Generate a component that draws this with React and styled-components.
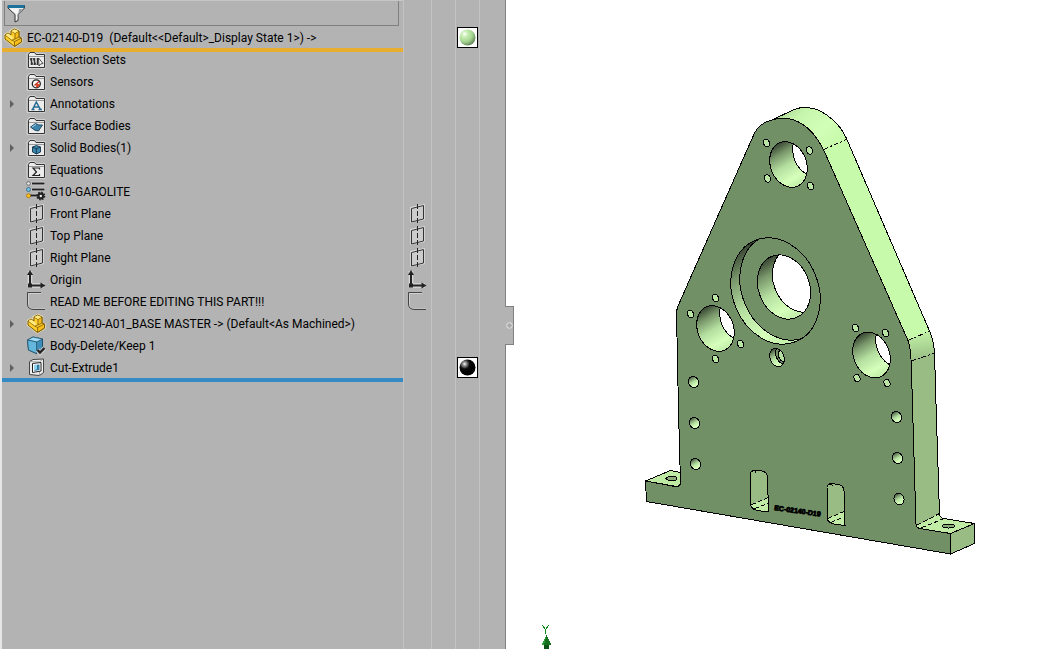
import { useState } from 'react';
import styled, { createGlobalStyle } from 'styled-components';

const GlobalStyle = createGlobalStyle`
* {
    box-sizing: border-box;
}
body {
    margin: 0;
    background: #ffffff;
    font-family: Roboto, "Noto Sans", sans-serif;
    font-size: 12px;
    color: #000000;
}
`;

const Page = styled.div`
display: flex;
min-height: 100vh;
`;

const Panel = styled.aside`
position: relative;
display: flex;
flex: none;
background: #b3b3b3;
border-left: 2px solid #e6e6e6;
border-right: 1px solid #808080;
`;

const TreeColumn = styled.div`
width: 401px;
border-top: 1px solid #c6c6c6;
`;

const FilterBar = styled.label`
display: flex;
align-items: center;
height: 25px;
margin: 0 4px 1px 2px;
padding-left: 1px;
border: 1px solid #808080;
border-top: none;
`;

const FilterInput = styled.input`
flex: 1;
min-width: 0;
border: none;
outline: none;
background: transparent;
font: inherit;
`;

const Tree = styled.ul`
list-style: none;
margin: 0;
padding: 0;
`;

const Row = styled.li`
position: relative;
display: flex;
align-items: center;
height: 22px;
padding-left: ${(props) => (props.$root ? 1 : 4)}px;
white-space: pre;
`;

const Bar = styled.span`
position: absolute;
z-index: 1;
left: 0;
right: 0;
bottom: -3px;
height: 4px;
background: ${(props) => props.$color};
`;

const Expander = styled.button`
display: flex;
align-items: center;
justify-content: center;
width: 12px;
height: 16px;
margin-right: 8px;
padding: 0;
border: none;
background: none;
visibility: ${(props) => (props.$shown ? 'visible' : 'hidden')};
`;

const Icon = styled.svg`
display: block;
flex: none;
width: 20px;
height: 20px;
overflow: visible;
`;

const Label = styled.span`
margin-left: 4px;
line-height: 20px;
`;

const Lane = styled.div`
width: ${(props) => props.$width}px;
padding-top: 27px;
border-left: 1px solid #c3c3c3;
`;

const Slot = styled.div`
display: flex;
align-items: ${(props) => (props.$top ? 'flex-start' : 'center')};
height: 22px;
padding-left: ${(props) => (props.$top ? 1 : 3)}px;
`;

const Swatch = styled.button`
display: block;
width: 21px;
height: 21px;
padding: 1px;
border: 1px solid #000000;
background: #ffffff;
& svg {
    display: block;
    width: 17px;
    height: 17px;
}
`;

const Handle = styled.button`
position: absolute;
z-index: 2;
right: -9px;
top: calc(50% - 19px);
display: flex;
align-items: center;
justify-content: center;
width: 9px;
height: 39px;
padding: 0;
border: 1px solid #808080;
border-left: none;
background: #b3b3b3;
`;

const Viewport = styled.main`
flex: 1;
min-width: 0;
height: 100vh;
& svg {
    display: block;
    width: 100%;
    height: 100%;
}
`;

const Folder = ({ children }) => (
    <Icon viewBox="0 0 20 20">
        <path d="M1 18.5V4L3 1.5H9L10.5 3.5H19V18.5Z" fill="none" stroke="#d0d0d0" />
        <path d="M2.5 17.5V4.5L4 2.5H8.5L10 4.5H18.5V17.5Z" fill="#ececec" stroke="#333" />
        <path d="M3 6.5H18" stroke="#999" />
        {children}
    </Icon>
);

const SelectionIcon = () => (
    <Folder>
        <path d="M5.5 8V15M8.5 8V15M11.5 8V15" stroke="#333" strokeWidth="1.5" />
        <path d="M4 8L7 15M7 8L10 15" stroke="#333" />
        <path d="M12.5 8L17 13.5L14.5 14L13 16Z" fill="#fff" stroke="#222" strokeWidth=".8" />
    </Folder>
);

const SensorIcon = () => (
    <Folder>
        <circle cx="10.3" cy="11.8" r="4" fill="#fff" stroke="#222" strokeWidth="1.3" />
        <path d="M10.3 12L13.8 12A4 4 0 0 1 10 15.5Z" fill="#e03c20" />
        <path d="M8.5 13.5L13 9.5" stroke="#c42a16" strokeWidth="1.3" />
    </Folder>
);

const AnnotationIcon = () => (
    <Folder>
        <path d="M6.5 15.5L10.3 8L14.5 15.5M8 13H13M5.5 15.5H8.5M12.5 15.5H16" fill="none" stroke="#246a93" strokeWidth="1.5" />
    </Folder>
);

const SurfaceIcon = () => (
    <Folder>
        <path d="M4.5 11L9.5 7.5Q12.5 9.5 16.5 9L12.5 15Q9 15.5 4.5 11Z" fill="#3f84ad" stroke="#12384f" strokeWidth=".8" />
        <path d="M6 11L10 8.500" stroke="#9bd0ea" />
    </Folder>
);

const SolidIcon = () => (
    <Folder>
        <path d="M6.5 9L10.5 7.5L14.5 9V14L10.5 16L6.5 14Z" fill="#3c86b0" stroke="#103448" strokeWidth=".9" />
        <path d="M6.5 9L10.3 10.8V15.8M10.3 10.8L14.5 9" fill="none" stroke="#103448" strokeWidth=".9" />
    </Folder>
);

const EquationIcon = () => (
    <Folder>
        <path d="M13.5 9.5V8H7L10.5 12L7 15.5H13.5V14" fill="none" stroke="#222" strokeWidth="1.2" />
    </Folder>
);

const MaterialIcon = () => (
    <Icon viewBox="0 0 20 20">
        <path d="M5.5 1.5H19M5.5 7.5H19M5.5 13.5H12" stroke="#d8d8d8" strokeWidth="3.5" />
        <path d="M6 1.5H18.5M6 7.5H18.5M4 13.5H12" stroke="#222" strokeWidth="2" />
        <circle cx="2.5" cy="1.5" r="1.8" fill="#eee" stroke="#555" strokeWidth=".8" />
        <circle cx="2.5" cy="7.5" r="2" fill="#7cc4e4" stroke="#276080" strokeWidth=".8" />
        <circle cx="2.5" cy="13.7" r="2" fill="#ffc320" stroke="#a67500" strokeWidth=".8" />
        <circle cx="14.8" cy="14" r="3.4" fill="#222" />
        <circle cx="14.8" cy="14" r="3.7" fill="none" stroke="#222" strokeWidth="1.5" strokeDasharray="1.5 1.4" />
        <circle cx="14.8" cy="14" r="1.2" fill="#eee" />
    </Icon>
);

const PlaneIcon = () => (
    <Icon viewBox="0 0 20 20">
        <path d="M4.5 4L16.5 1.5V15L4.5 17.5Z" fill="#d0d0d0" stroke="#dcdcdc" strokeWidth="2.5" />
        <path d="M4.5 4.5L16.5 1.5V15L4.5 18Z" fill="#cccccc" stroke="#333" />
        <path d="M10.5 0V5M10.5 7V12M10.5 14V19" stroke="#222" />
    </Icon>
);

const OriginIcon = () => (
    <Icon viewBox="0 0 20 20">
        <path d="M4 1V15.5H18" fill="none" stroke="#d8d8d8" strokeWidth="4.5" />
        <path d="M4 3V15.5H16" fill="none" stroke="#222" strokeWidth="2" />
        <path d="M4 0L7 5H1ZM19.5 15.5L14.5 12.5V18.5ZM2 13.5H6V17.5H2Z" fill="#222" />
    </Icon>
);

const SketchIcon = () => (
    <Icon viewBox="0 0 20 20">
        <path d="M15 1.5H2.5V12Q2.5 17 8 17H19" fill="none" stroke="#d0d0d0" />
        <path d="M15 .5H1.5V12Q1.5 17.5 8 17.5H19" fill="none" stroke="#444" />
    </Icon>
);

const PartIcon = () => (
    <Icon viewBox="0 0 20 20">
        <path d="M2 7L5 5L8 6L7.5 3L12 1L16 3V9L18.5 10V14L11.5 18.5L8.5 16L2 11Z" fill="#f3c11d" stroke="#e2d9b0" strokeWidth="2.5" />
        <path d="M2 7L5 5L8 7V3L11.5 1L16 3V9L18.5 10V14L11.5 18.5L2 11Z" fill="#ffd02c" stroke="#7a5a08" />
        <path d="M8 3L12 5.5V11L16 9V3L12 5.5M2 7L8.5 12L12 11M8.5 12L11.5 13.5V18.5L18.5 14V10L11.5 13.5" fill="#f0b010" fillOpacity=".6" stroke="#7a5a08" strokeWidth=".8" />
        <path d="M8.3 3L11.5 1.5L15.5 3L12 5ZM2.5 7L5 5.5L8 7.5L11 11L8.5 11.5Z" fill="#ffe982" />
    </Icon>
);

const BodyDeleteIcon = () => (
    <Icon viewBox="0 0 20 20">
        <path d="M1.5 4L7 1L16.5 3V13L10.5 17.5L2.5 14Z" fill="#3d8db8" stroke="#1d4c66" />
        <path d="M1.5 4L7 1L16.5 3L10.5 6Z" fill="#9ddcf4" stroke="#1d4c66" strokeWidth=".7" />
        <path d="M1.5 4L10.5 6V17.5L2.5 14Z" fill="#63b6dc" stroke="#1d4c66" strokeWidth=".7" />
        <path d="M11.5 14L14 17L18.5 12" fill="none" stroke="#c8c8c8" strokeWidth="4.5" />
        <path d="M11.5 14L14 16.5L18.5 12" fill="none" stroke="#222" strokeWidth="2.4" />
    </Icon>
);

const CutIcon = () => (
    <Icon viewBox="0 0 20 20">
        <path d="M3.5 3.5L7 1.5L17.5 1V14.5L13.5 17.5L3.5 16.5Z" fill="#ededed" stroke="#444" />
        <path d="M3.5 3.5L13.5 4V17.5M13.5 4L17 1" fill="none" stroke="#888" strokeWidth=".7" />
        <path d="M6.500 5.5L15 4.5V13L6.500 14.5Z" fill="#fff" stroke="#222" />
        <path d="M8 7L13.5 6.5V12L8 13Z" fill="#2d7ba4" />
        <path d="M8 7H11V11L8 13Z" fill="#8fd2ee" />
    </Icon>
);

const FunnelIcon = () => (
    <Icon viewBox="0 0 20 20">
        <path d="M2 2.5H18.5V5L12 11.5V17.5L9 19V11.5L2 5Z" fill="#e4e4e4" stroke="#333" />
        <path d="M2 2H18.5V5H2Z" fill="#1d719d" />
        <path d="M3.5 5.5H17L11.5 11V16L10 17V11Z" fill="#f6f6f6" />
        <path d="M13 6H16.5L11.5 11V17Z" fill="#95a0a6" />
    </Icon>
);

const Ball = ({ id, stops }) => (
    <svg viewBox="0 0 17 17">
        <defs>
            <radialGradient id={id} cx=".32" cy=".28" r=".75">
                {stops.map(([offset, color]) => (
                    <stop key={offset} offset={offset} stopColor={color} />
                ))}
            </radialGradient>
        </defs>
        <circle cx="8.5" cy="8.5" r="8" fill={`url(#${id})`} />
    </svg>
);

const greenStops = [[0, '#ffffff'], [0.25, '#c9efb6'], [0.65, '#a5d590'], [1, '#67895a']];
const blackStops = [[0, '#ffffff'], [0.12, '#aaaaaa'], [0.42, '#0a0a0a'], [1, '#000000']];

const rootItem = { name: 'EC-02140-D19  (Default<<Default>_Display State 1>) ->', swatch: 'green' };

const items = [
    { name: 'Selection Sets', icon: SelectionIcon },
    { name: 'Sensors', icon: SensorIcon },
    { name: 'Annotations', icon: AnnotationIcon, expandable: true },
    { name: 'Surface Bodies', icon: SurfaceIcon },
    { name: 'Solid Bodies(1)', icon: SolidIcon, expandable: true },
    { name: 'Equations', icon: EquationIcon },
    { name: 'G10-GAROLITE', icon: MaterialIcon },
    { name: 'Front Plane', icon: PlaneIcon, display: PlaneIcon },
    { name: 'Top Plane', icon: PlaneIcon, display: PlaneIcon },
    { name: 'Right Plane', icon: PlaneIcon, display: PlaneIcon },
    { name: 'Origin', icon: OriginIcon, display: OriginIcon },
    { name: 'READ ME BEFORE EDITING THIS PART!!!', icon: SketchIcon, display: SketchIcon },
    { name: 'EC-02140-A01_BASE MASTER -> (Default<As Machined>)', icon: PartIcon, expandable: true },
    { name: 'Body-Delete/Keep 1', icon: BodyDeleteIcon },
    { name: 'Cut-Extrude1', icon: CutIcon, expandable: true, swatch: 'black' },
];

const TreeRow = ({ item, last }) => {
    const ItemIcon = item.icon;
    return (
        <Row>
            <Expander $shown={item.expandable} aria-label={`Expand ${item.name}`}>
                <svg width="4" height="8" viewBox="0 0 4 8">
                    <path d="M0 0L4 4L0 8Z" fill="#606060" />
                </svg>
            </Expander>
            <ItemIcon />
            <Label>{item.name}</Label>
            {last && <Bar $color="#348bc4" />}
        </Row>
    );
};

/* every bore is the same ellipse at another scale, leaning 21.5 degrees */
const Bore = ({ id, cx, cy, rx, ry, dx, dy }) => (
    <g>
        <clipPath id={id}>
            <ellipse rx={rx} ry={ry} transform={`translate(${cx} ${cy}) rotate(-21.5)`} />
        </clipPath>
        <ellipse rx={rx} ry={ry} transform={`translate(${cx} ${cy}) rotate(-21.5)`} fill="url(#bore)" />
        <g clipPath={`url(#${id})`}>
            <ellipse rx={rx} ry={ry} transform={`translate(${cx + dx} ${cy + dy}) rotate(-21.5)`} fill="#fff" stroke="#000" />
        </g>
        <ellipse rx={rx} ry={ry} transform={`translate(${cx} ${cy}) rotate(-21.5)`} fill="none" stroke="#000" />
    </g>
);

const screwHoles = [
    [766.5, 143], [809.5, 150.5], [767.5, 178.5], [810.5, 186],
    [715.5, 298], [690.5, 314], [740.5, 344], [715.5, 359],
    [855.5, 328], [885.5, 333], [857, 378], [887, 383],
];

const sideHoles = [
    [693.5, 382], [694.5, 423], [695.5, 464],
    [896.5, 417], [897.5, 458], [899, 499],
];

const Model = () => (
    <svg
        viewBox="506 0 549 649"
        preserveAspectRatio="xMidYMax meet"
        shapeRendering="crispEdges"
        strokeWidth="1"
        strokeLinejoin="round"
        role="img"
        aria-label="EC-02140-D19 part"
    >
        <defs>
            <linearGradient id="bore" x1=".42" y1="0" x2=".55" y2="1">
                <stop offset="0" stopColor="#35432f" />
                <stop offset=".22" stopColor="#78966a" />
                <stop offset=".5" stopColor="#b5dfa0" />
                <stop offset=".8" stopColor="#d5ffba" />
                <stop offset="1" stopColor="#c0eba8" />
            </linearGradient>
            <linearGradient id="crown" x1="0" y1="0" x2="1" y2=".6">
                <stop offset="0" stopColor="#a2c88e" />
                <stop offset=".35" stopColor="#c6f5ad" />
                <stop offset=".7" stopColor="#d2ffb7" />
                <stop offset="1" stopColor="#c8faab" />
            </linearGradient>
            <linearGradient id="bend" x1=".3" y1="0" x2=".4" y2="1">
                <stop offset="0" stopColor="#c3f4a8" />
                <stop offset="1" stopColor="#98bc83" />
            </linearGradient>
        </defs>

        {/* thickness of the plate */}
        <path d="M773 119.5L793 110Q800 107 807 107.5Q820 108 833 120Q841 127 846.5 138.5L823.5 149.5Z" fill="url(#crown)" />
        <path d="M823.5 149.5L846.5 138.5L929.5 331L908 340.5Z" fill="#c8faab" />
        <path d="M908 340.5L929.5 331Q935 344 934.5 353L911 361Z" fill="url(#bend)" />
        <path d="M911 361L934.5 353L939.5 514L916.5 526Z" fill="#98bc83" />
        <path d="M916.5 526L939.5 513Q940 518 944 518.5L974.5 523.5L950.5 533.5L919 528.5Z" fill="#c0eca5" />
        <path d="M950.5 533.5L974.5 523.5V543.5L950.5 554Z" fill="#98bc83" stroke="#000" />
        <path d="M645.5 481L670.5 470.5L680.5 472.5V484L677 486.5Z" fill="#bfeaa4" stroke="#000" />
        <path d="M773 119.5L793 110Q800 107 807 107.5Q820 108 833 120Q841 127 846.5 138.5L929.5 331Q934 342 934.5 353L936.5 420L939.5 514Q940 518 944 518.5L974.5 523.5" fill="none" stroke="#000" />
        <path d="M823.5 149.5L846.5 139.5M908 340.5L929.5 331M911 361L934.5 353" stroke="#000" strokeDasharray="5 2 2 2" />
        <path d="M917 525L939.5 513.5M921 528L944 518.5" stroke="#000" strokeDasharray="5 2" />

        {/* front face */}
        <path
            d="M645.5 481L675 486.5Q680.5 487 680.5 483L678.5 410L676.5 312Q677 308 680 301.5L753 136.5Q757 126 767 121.5Q787 114 802 124Q814 131 823.5 149.5L908 340.5Q911 348 911.5 371L916 524Q916.5 528 920 528.5L950.5 533.5V554L646.5 501.5Z"
            fill="#729066"
            stroke="#000"
        />
        <ellipse cx="671.5" cy="478.5" rx="5.5" ry="2" fill="#8bab79" stroke="#000" />
        <ellipse cx="948.5" cy="526" rx="6" ry="2" fill="#8bab79" stroke="#000" />

        <Bore id="boreTop" cx={788.5} cy={164.5} rx={18} ry={23.5} dx={23} dy={-11} />
        <Bore id="boreLeft" cx={715.5} cy={328.5} rx={18} ry={23.5} dx={23} dy={-11} />
        <Bore id="boreRight" cx={871.5} cy={355} rx={18} ry={23.5} dx={23} dy={-11} />

        {/* counterbore */}
        <clipPath id="counter">
            <ellipse rx="43" ry="54.5" transform="translate(775.5 291) rotate(-21.5)" />
        </clipPath>
        <ellipse rx="43" ry="54.5" transform="translate(775.5 291) rotate(-21.5)" fill="url(#bore)" />
        <g clipPath="url(#counter)">
            <ellipse rx="43" ry="54.5" transform="translate(784.5 287) rotate(-21.5)" fill="#729066" stroke="#000" />
        </g>
        <ellipse rx="43" ry="54.5" transform="translate(775.5 291) rotate(-21.5)" fill="none" stroke="#000" />
        <Bore id="boreCenter" cx={784} cy={287} rx={25.5} ry={33} dx={15} dy={-7} />

        <clipPath id="pin">
            <ellipse rx="7" ry="9.5" transform="translate(777 357.5) rotate(-21.5)" />
        </clipPath>
        <ellipse rx="7" ry="9.5" transform="translate(777 357.5) rotate(-21.5)" fill="url(#bore)" />
        <g clipPath="url(#pin)">
            <ellipse rx="7" ry="9.5" transform="translate(783 355) rotate(-21.5)" fill="#729066" stroke="#000" />
            <ellipse rx="5" ry="6.5" transform="translate(783.5 355.5) rotate(-21.5)" fill="#b5dfa0" stroke="#000" />
        </g>
        <ellipse rx="7" ry="9.5" transform="translate(777 357.5) rotate(-21.5)" fill="none" stroke="#000" />

        {screwHoles.map(([x, y]) => (
            <ellipse key={`${x}-${y}`} rx="3" ry="3.8" transform={`translate(${x} ${y}) rotate(-21.5)`} fill="#b9e6a2" stroke="#000" />
        ))}
        {sideHoles.map(([x, y]) => (
            <ellipse key={`${x}-${y}`} rx="4.9" ry="5.8" transform={`translate(${x} ${y}) rotate(-21.5)`} fill="url(#bore)" stroke="#000" />
        ))}

        {/* slots */}
        {[[0, 0], [76.5, 13.5]].map(([x, y]) => (
            <g key={x} transform={`translate(${x} ${y})`}>
                <path d="M750.5 474Q751 470 755 470L762 471Q767 472 767.5 477L768.5 512L757 510.5Q751 509 750.5 504Z" fill="#98bc83" />
                <path d="M750.5 505L768.5 497.5V512L757 510.5Q751 509 750.5 505Z" fill="#c0eca5" />
                <path d="M751 505L768.5 497.5M754 509L768.5 503" stroke="#000" strokeDasharray="5 2" />
                <path d="M750.5 474Q751 470 755 470L762 471Q767 472 767.5 477L768.5 512L757 510.5Q751 509 750.5 504Z" fill="none" stroke="#000" />
                <path d="M752 472Q755 469 756 473" fill="none" stroke="#000" />
            </g>
        ))}

        <text
            transform="translate(774 510) rotate(8)"
            fontFamily="Liberation Sans, sans-serif"
            fontSize="7"
            fontWeight="bold"
            stroke="#000"
            strokeWidth=".8"
        >
            EC-02140-D19
        </text>

        {/* view triad */}
        <path d="M542.5 625.5L545.5 629.5L548.5 625.5M545.5 629.5V634" fill="none" stroke="#0a8a1c" />
        <path d="M546.5 635L551 644.5H542Z" fill="#17701f" />
        <path d="M546.5 635L544 644.5H542Z" fill="#2c9c36" />
        <path d="M544 644.5H549V649H544Z" fill="#0d5215" />
    </svg>
);

const App = () => {
    const [filter, setFilter] = useState('');
    const rows = [rootItem, ...items];
    return (
        <Page>
            <GlobalStyle />
            <Panel>
                <TreeColumn>
                    <FilterBar>
                        <FunnelIcon />
                        <FilterInput aria-label="Filter" value={filter} onChange={(e) => setFilter(e.target.value)} />
                    </FilterBar>
                    <Tree>
                        <Row $root>
                            <PartIcon />
                            <Label>{rootItem.name}</Label>
                            <Bar $color="#e8ae30" />
                        </Row>
                        {items.map((item, i) => (
                            <TreeRow key={item.name} item={item} last={i === items.length - 1} />
                        ))}
                    </Tree>
                </TreeColumn>
                <Lane $width={28}>
                    {rows.map((row) => (
                        <Slot key={row.name}>{row.display && <row.display />}</Slot>
                    ))}
                </Lane>
                <Lane $width={24} />
                <Lane $width={24}>
                    {rows.map((row) => (
                        <Slot key={row.name} $top>
                            {row.swatch && (
                                <Swatch aria-label={`Appearance of ${row.name}`}>
                                    <Ball id={row.swatch} stops={row.swatch === 'green' ? greenStops : blackStops} />
                                </Swatch>
                            )}
                        </Slot>
                    ))}
                </Lane>
                <Lane $width={26} />
                <Handle aria-label="Collapse panel">
                    <svg width="7" height="7" viewBox="0 0 7 7">
                        <circle cx="3.5" cy="3.5" r="2.8" fill="#aaa" stroke="#e4e4e4" />
                    </svg>
                </Handle>
            </Panel>
            <Viewport>
                <Model />
            </Viewport>
        </Page>
    );
};

export default App;
